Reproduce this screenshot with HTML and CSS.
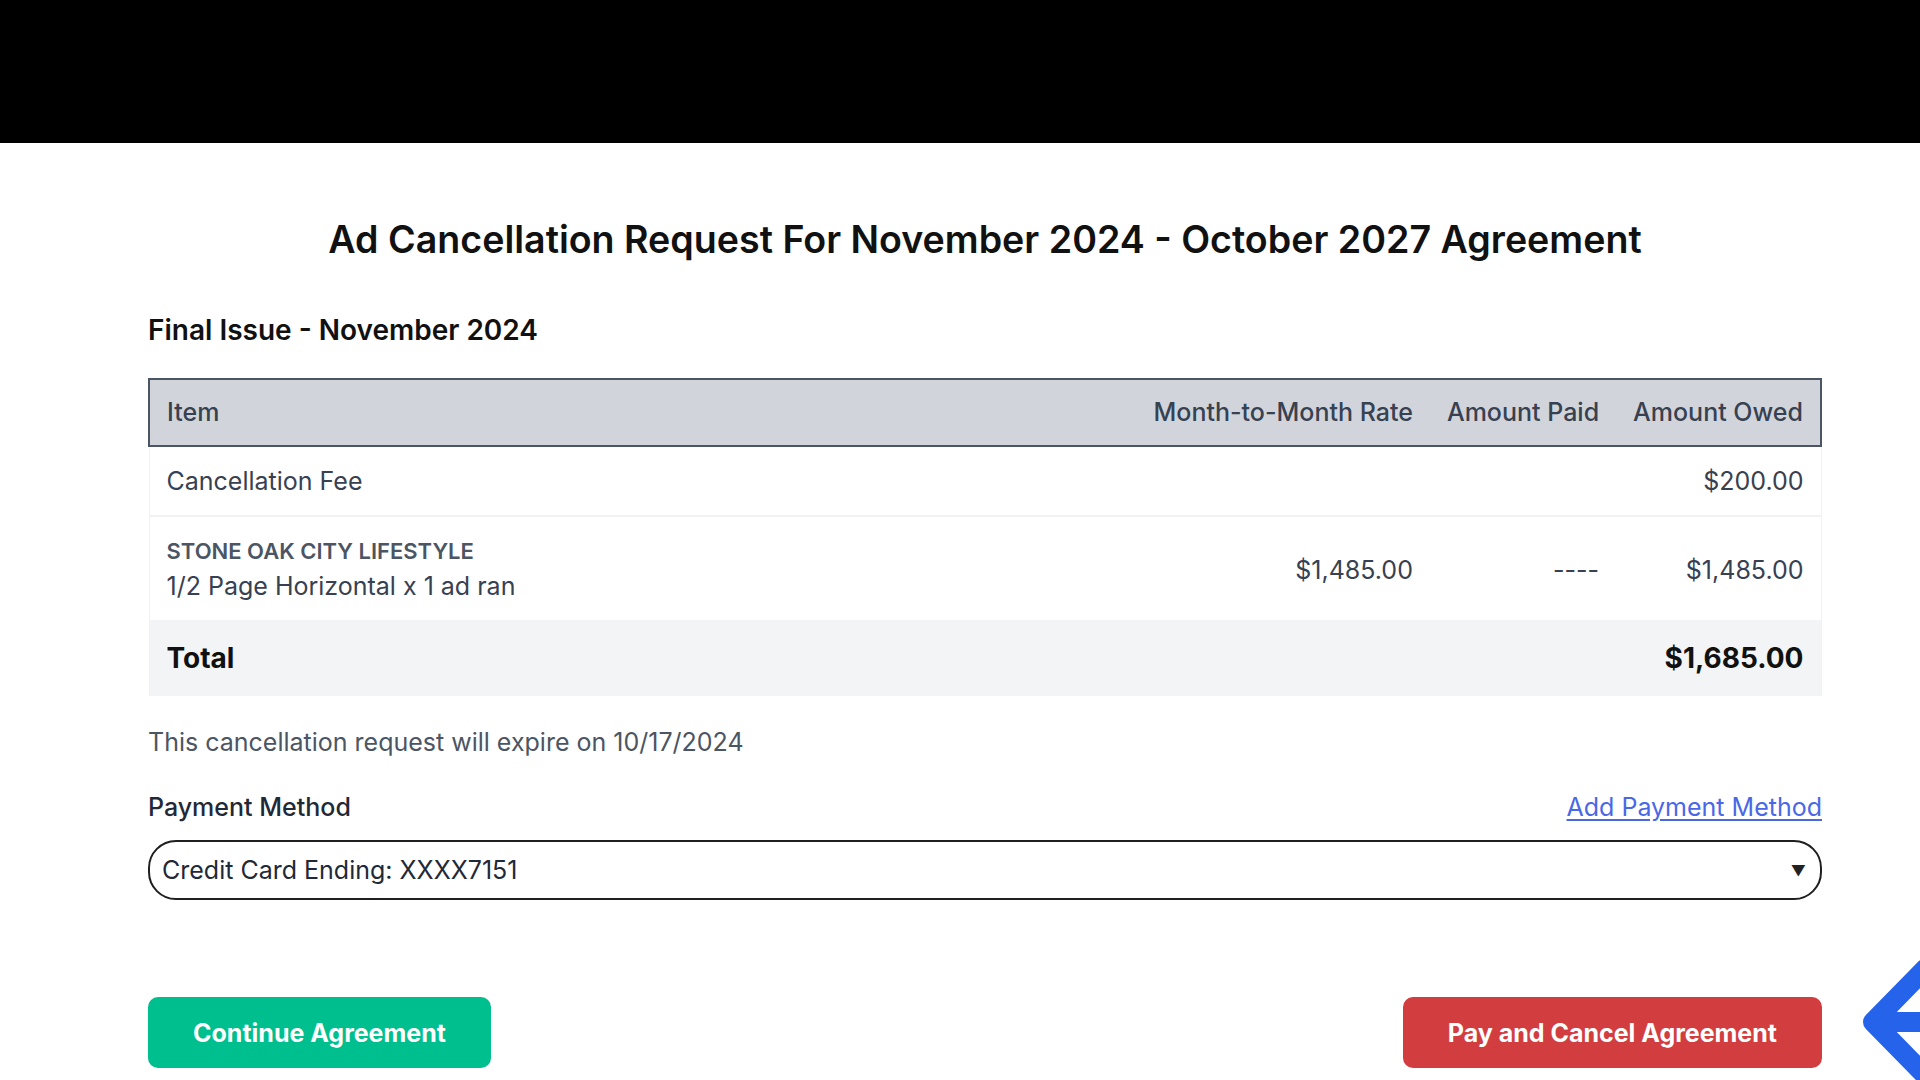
FILE: index.html
```html
<!DOCTYPE html>
<html lang="en">
<head>
<meta charset="utf-8">
<title>Ad Cancellation Request</title>
<link rel="stylesheet" href="styles.css">
</head>
<body>
<header class="topbar"></header>
<main class="page">
  <h1 class="title">Ad Cancellation Request For November 2024 - October 2027 Agreement</h1>
  <h2 class="issue">Final Issue - November 2024</h2>
  <table class="items">
    <thead>
      <tr>
        <th class="col-item">Item</th>
        <th class="num">Month-to-Month Rate</th>
        <th class="num">Amount Paid</th>
        <th class="num">Amount Owed</th>
      </tr>
    </thead>
    <tbody>
      <tr class="row-fee">
        <td>Cancellation Fee</td>
        <td class="num"></td>
        <td class="num"></td>
        <td class="num">$200.00</td>
      </tr>
      <tr class="row-ad">
        <td>
          <div class="pub">STONE OAK CITY LIFESTYLE</div>
          <div class="desc">1/2 Page Horizontal x 1 ad ran</div>
        </td>
        <td class="num">$1,485.00</td>
        <td class="num">----</td>
        <td class="num">$1,485.00</td>
      </tr>
      <tr class="row-total">
        <td>Total</td>
        <td class="num"></td>
        <td class="num"></td>
        <td class="num">$1,685.00</td>
      </tr>
    </tbody>
  </table>
  <p class="expire">This cancellation request will expire on 10/17/2024</p>
  <div class="pay-head">
    <span class="pay-label">Payment Method</span>
    <a class="add-link" href="#">Add Payment Method</a>
  </div>
  <div class="select">
    <span>Credit Card Ending: XXXX7151</span>
    <span class="caret">&#9660;</span>
  </div>
  <div class="actions">
    <button class="btn btn-continue">Continue Agreement</button>
    <button class="btn btn-cancel">Pay and Cancel Agreement</button>
  </div>
</main>
<svg class="pointer" width="67" height="125" viewBox="0 0 67 125" aria-hidden="true">
  <path d="M72 14 L20 67 L72 120 M20 67 L120 67" fill="none" stroke="#2563eb" stroke-width="20" stroke-linecap="round" stroke-linejoin="round"/>
</svg>
</body>
</html>
```

FILE: styles.css
```css
* { box-sizing: border-box; }
html, body { margin: 0; padding: 0; }
body {
  font-family: Inter, "Noto Sans", "Liberation Sans", sans-serif;
  color: #374151;
  background: #ffffff;
  width: 1920px;
  height: 1080px;
  overflow: hidden;
  position: relative;
}
.topbar {
  height: 143px;
  background: #000;
}
.page {
  width: 1674px;
  margin-left: 148px;
  display: flex;
  flex-direction: column;
}
.title {
  margin: 74px 0 0;
  text-align: center;
  font-size: 37.6px;
  line-height: 46px;
  font-weight: 600;
  color: #111111;
}
.issue {
  margin: 50px 0 0;
  font-size: 28px;
  line-height: 34px;
  font-weight: 600;
  color: #111111;
}
.items {
  margin-top: 31px;
  width: 100%;
  border-collapse: collapse;
  font-size: 25px;
  line-height: 30px;
}
.items th {
  background: #d1d5db;
  border-top: 2px solid #4b5563;
  border-bottom: 2px solid #4b5563;
  font-weight: 500;
  color: #374151;
  padding: 17px 17px 18px;
  text-align: left;
  white-space: nowrap;
}
.items th:first-child { border-left: 2px solid #4b5563; }
.items th:last-child { border-right: 2px solid #4b5563; }
.items .col-item { width: 100%; }
.items .num { text-align: right; white-space: nowrap; }
.items td {
  padding: 19px 17px;
  vertical-align: middle;
  color: #374151;
}
.items tbody tr { border-left: 1px solid #f1f2f4; border-right: 1px solid #f1f2f4; }
.row-fee td { border-bottom: 2px solid #f1f2f4; padding: 19px 17px; }
.row-ad td { padding: 21px 17px 19px; }
.pub {
  font-size: 22px;
  line-height: 26px;
  font-weight: 600;
  color: #4b5563;
}
.desc { margin-top: 7px; }
.row-total td {
  background: #f3f4f6;
  font-size: 28px;
  line-height: 34px;
  font-weight: 700;
  color: #111111;
  padding: 21px 17px;
}
.expire {
  margin: 31px 0 0;
  font-size: 25px;
  line-height: 30px;
  color: #4b5563;
}
.pay-head {
  margin-top: 35px;
  display: flex;
  justify-content: space-between;
  align-items: center;
  font-size: 25px;
  line-height: 30px;
}
.pay-label { font-weight: 500; color: #1f2937; }
.add-link { color: #4a68e6; text-decoration: underline; text-underline-offset: 3px; }
.select {
  margin-top: 18px;
  height: 60px;
  border: 2px solid #1f1f1f;
  border-radius: 28px;
  display: flex;
  align-items: center;
  justify-content: space-between;
  padding: 0 14px 0 12px;
  font-size: 25px;
  color: #1f2937;
}
.caret { font-size: 15px; color: #222; }
.actions {
  margin-top: 97px;
  display: flex;
  justify-content: space-between;
}
.btn {
  height: 71px;
  padding: 0 45px;
  border: none;
  border-radius: 10px;
  font-family: inherit;
  font-size: 25px;
  font-weight: 700;
  color: #ffffff;
}
.btn-continue { background: #00bf8f; }
.btn-cancel { background: #d23d3f; }
.pointer {
  position: absolute;
  left: 1853px;
  top: 955px;
}
```
